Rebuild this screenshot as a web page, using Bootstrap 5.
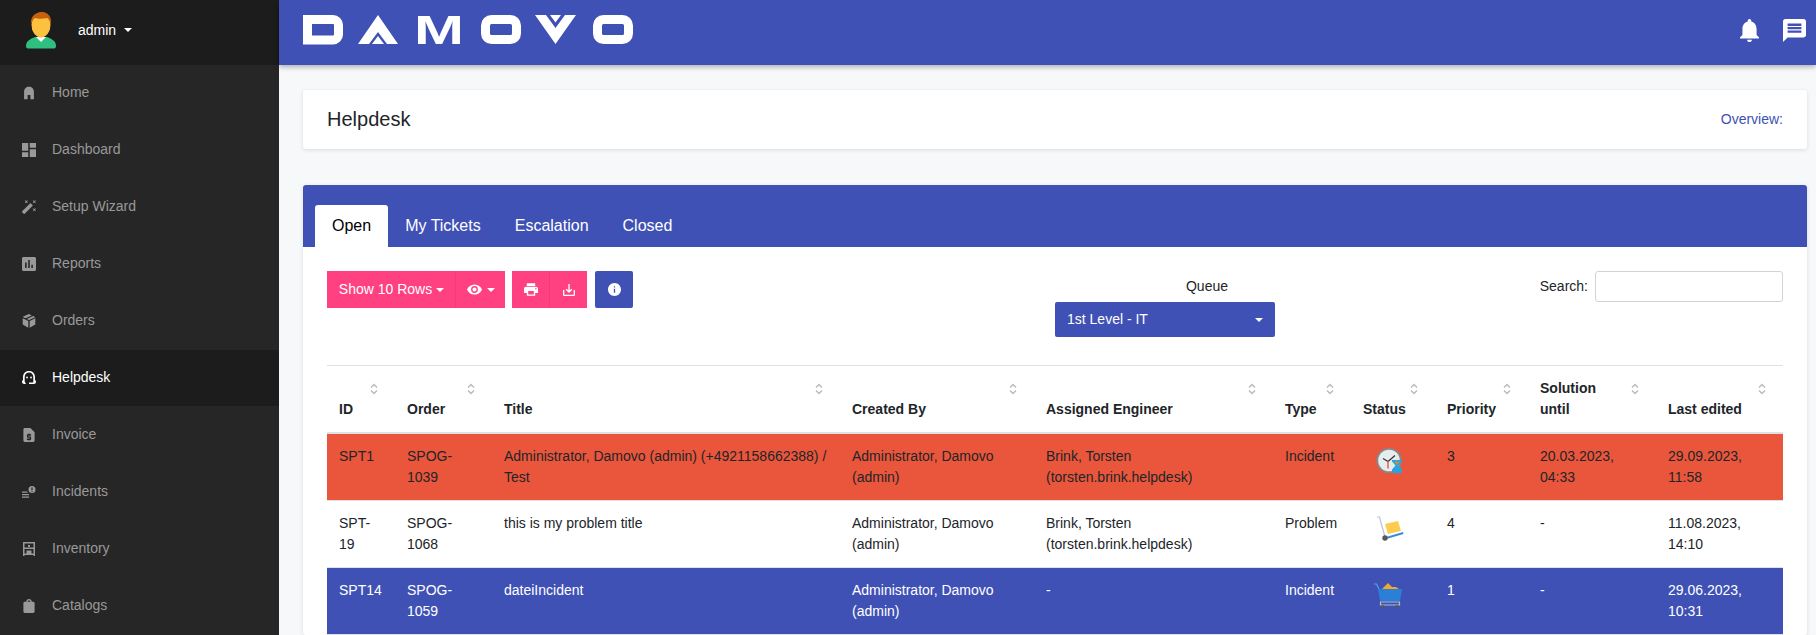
<!DOCTYPE html>
<html lang="en">
<head>
  <meta charset="UTF-8">
  <title>Helpdesk | Damovo</title>
  <link href="https://cdn.jsdelivr.net/npm/bootstrap@5.3.3/dist/css/bootstrap.min.css" rel="stylesheet">
  <style>
    html, body { height: 100%; overflow: hidden; }
    body {
      background-color: #f7f8fa;
      font-family: "Liberation Sans", Arial, sans-serif;
      font-size: 14px;
      color: #212529;
    }
    .side-bar { width: 279px; background: #262626; flex-shrink: 0; }
    .side-head { height: 65px; background: #1c1c1c; padding: 0 0 5px 26px; }
    .side-head .user-name { color: #fff; margin-left: 22px; }
    .side-caret, .sel-caret {
      display: inline-block; width: 0; height: 0;
      border-left: 4px solid transparent; border-right: 4px solid transparent; border-top: 4px solid #fff;
    }
    .side-caret { margin-left: 8px; }
    .side-link { height: 56px; margin-bottom: 1px; padding: 0 0 1px 22px; color: #999; gap: 16px; }
    .side-link svg { width: 14px; height: 14px; fill: #999; flex-shrink: 0; }
    .side-link.is-active { background: #1c1c1c; color: #fff; }
    .side-link.is-active svg { fill: #fff; }
    .main-area { min-width: 0; }
    .top-bar { height: 65px; background: #3f51b5; padding: 0 10px 0 24px; box-shadow: 0 2px 5px rgba(0,0,0,.3); flex-shrink: 0; }
    .top-bar svg { fill: #fff; margin-bottom: 5px; }
    .logo-art { overflow: visible; }
    .bell-ico { width: 19px; height: 23px; }
    .msg-ico { width: 23px; height: 23px; }
    .top-icons { gap: 24px; }
    .page-wrap { padding: 25px 9px 0 24px; }
    .title-box {
      height: 59px; background: #fff; border-radius: 3px; padding: 0 24px;
      box-shadow: 0 1px 4px rgba(0,0,0,.12); margin-bottom: 36px;
    }
    .title-box h1 { font-size: 20px; font-weight: 400; margin: 0 0 2px; }
    .title-box a { color: #3f51b5; text-decoration: none; }
    .tabs-box { background: #fff; border-radius: 3px; box-shadow: 0 1px 4px rgba(0,0,0,.12); }
    .tabs-head { background: #3f51b5; height: 62px; padding: 20px 12px 0; border-radius: 3px 3px 0 0; }
    .tabs-head .nav-tabs { border: 0; }
    .tabs-head .nav-link {
      color: #fff; font-size: 16px; height: 42px; padding: 9px 17px; border: 0; border-radius: 3px 3px 0 0; line-height: 24px;
    }
    .tabs-head .nav-link.active { color: #000; background: #fff; }
    .tabs-body { padding: 24px 24px 0; }
    .tool-row { height: 95px; border-bottom: 1px solid #dee2e6; }
    .tool-left { width: 50%; gap: 7px; }
    .tool-btn {
      height: 37px; border: 0; border-radius: 0; color: #fff; background: #ff4081;
      font-size: 14px; padding: 0; display: inline-flex; align-items: center; justify-content: center;
    }
    .tool-btn svg { fill: #fff; }
    .tool-btn + .tool-btn { border-left: 1px solid #f53a78; }
    .btn-rows { width: 128px; padding-left: 1px; }
    .btn-eye { width: 50px; }
    .btn-eye svg { width: 15px; height: 11px; margin-right: 1px; }
    .btn-print { width: 37px; }
    .btn-print svg { width: 14px; height: 13px; }
    .btn-down { width: 38px; }
    .btn-down svg { width: 12px; height: 12px; }
    .tool-btn.blue-btn { background: #3f51b5; width: 38px; border-radius: 2px; margin-left: 1px; }
    .blue-btn svg { width: 13px; height: 13px; }
    .btn-caret { display: inline-block; border-left: 4px solid transparent; border-right: 4px solid transparent; border-top: 4px solid #fff; margin-left: 4px; }
    .queue-box { width: 220px; }
    .queue-box label { display: block; padding-left: 84px; text-align: center; margin: 5px 0 5px; height: 21px; line-height: 21px; }
    .queue-sel { height: 35px; background: #3f51b5; color: #fff; border-radius: 2px; padding: 0 12px; }
    .search-box { gap: 7px; height: 31px; }
    .search-box input { width: 188px; height: 31px; border: 1px solid #ced4da; border-radius: 3px; }
    .tick-table { table-layout: fixed; width: 100%; margin: 0; color: #212529; --bs-table-bg: transparent; }
    .tick-table th, .tick-table td { padding: 12px; line-height: 21px; border-bottom: 1px solid #dee2e6; vertical-align: top; }
    .tick-table thead th { position: relative; vertical-align: bottom; font-weight: 700; border-bottom: 2px solid #dee2e6; height: 67px; padding-top: 11px; padding-bottom: 12px; }
    .sort-ico { position: absolute; right: 17px; top: 17px; width: 8px; height: 12px; fill: none; stroke: #bbb; stroke-width: 1.5; }
    .row-red td { background: #ea563b; }
    .row-blue td { background: #3f51b5; color: #fff; }
    .stat-ico { width: 30px; height: 30px; display: block; margin-left: 11px; }
    .c-id { width: 68px; } .c-order { width: 97px; } .c-title { width: 348px; } .c-by { width: 194px; }
    .c-eng { width: 239px; } .c-type { width: 78px; } .c-stat { width: 84px; } .c-prio { width: 93px; }
    .c-sol { width: 128px; } .c-last { width: 127px; }
  </style>
</head>
<body>
<div class="d-flex h-100">
  <aside class="side-bar">
    <div class="side-head d-flex align-items-center">
      <svg width="30" height="37" viewBox="0 0 30 37">
        <path d="M0 34c0-5 4-7 9-9h12c5 2 9 4 9 9 0 2-1 2.500-3 2.500H3c-2 0-3-.5-3-2.500z" fill="#2fc07f"/>
        <path d="M10 25h10l-5 5z" fill="#fff"/>
        <ellipse cx="15" cy="13" rx="9.500" ry="12.500" fill="#fbc13f"/>
        <path d="M5 13C4 5 9 0 16 0c6 0 10 5 9 13-1-4-2-6-4-7-4 1-9 1-12 0-2 1-3 3-4 7z" fill="#c8610e"/>
      </svg>
      <span class="user-name">admin</span><span class="side-caret"></span>
    </div>
    <div class="d-flex flex-column">
      <a class="side-link d-flex align-items-center text-decoration-none"><svg viewBox="2 3 20 18"><path d="M12 3C8 3 5 6 5 10v11h5v-6h4v6h5V10c0-4-3-7-7-7z"/></svg>Home</a>
      <a class="side-link d-flex align-items-center text-decoration-none"><svg viewBox="3 3 18 18"><path d="M3 13h8V3H3v10zm0 8h8v-6H3v6zm10 0h8V11h-8v10zm0-18v6h8V3h-8z"/></svg>Dashboard</a>
      <a class="side-link d-flex align-items-center text-decoration-none"><svg viewBox="1 2 21 21"><path d="M7.500 5.600 10 7 8.600 4.500 10 2 7.500 3.400 5 2l1.400 2.500L5 7zm12 9.800L17 14l1.400 2.500L17 19l2.500-1.400L22 19l-1.400-2.500L22 14zM22 2l-2.500 1.400L17 2l1.400 2.500L17 7l2.500-1.400L22 7l-1.400-2.500zm-7.630 5.290a1 1 0 0 0-1.410 0L1.290 18.960a1 1 0 0 0 0 1.410l2.340 2.340c.39.39 1.020.39 1.410 0L16.700 11.050a1 1 0 0 0 0-1.410z"/></svg>Setup Wizard</a>
      <a class="side-link d-flex align-items-center text-decoration-none"><svg viewBox="3 3 18 18"><path d="M19 3H5c-1.100 0-2 .9-2 2v14c0 1.100.9 2 2 2h14c1.100 0 2-.9 2-2V5c0-1.100-.9-2-2-2zM9 17H7v-7h2v7zm4 0h-2V7h2v10zm4 0h-2v-4h2v4z"/></svg>Reports</a>
      <a class="side-link d-flex align-items-center text-decoration-none"><svg viewBox="2 2 20 20"><path d="M12 2 3 6l4 2 9-4zM18 5 9 9l3 1.500L21 6.500zM3 8v9l8 4.500V12zM21 8l-8 4v9.500l8-4.500z"/></svg>Orders</a>
      <a class="side-link is-active d-flex align-items-center text-decoration-none"><svg viewBox="0 0 14 14"><path d="M7 0C3.300 0 1 2.700 1 6.200V9c-.7.400-1 1-1 1.700C0 12 1 13 2.300 13H4l-1.300-2.400V6.200C2.700 3.600 4.500 1.600 7 1.600s4.300 2 4.300 4.600v5.300H7V13h4.700c1.300 0 2.300-1 2.300-2.300 0-.7-.3-1.300-1-1.700V6.200C13 2.700 10.700 0 7 0z"/><circle cx="5" cy="6.500" r=".9"/><circle cx="9" cy="6.500" r=".9"/></svg>Helpdesk</a>
      <a class="side-link d-flex align-items-center text-decoration-none"><svg viewBox="4 2 16 20"><path fill-rule="evenodd" d="M14 2H6c-1.100 0-2 .9-2 2v16c0 1.100.9 2 2 2h12c1.100 0 2-.9 2-2V8zM11 10h2v1h2v2h-4v1h3c.6 0 1 .4 1 1v3c0 .6-.4 1-1 1h-1v1h-2v-1H9v-2h4v-1h-3c-.6 0-1-.4-1-1v-3c0-.6.4-1 1-1h1z"/></svg>Invoice</a>
      <a class="side-link d-flex align-items-center text-decoration-none"><svg viewBox="0 0 14 14"><path fill-rule="evenodd" d="M10 1a3.500 3.500 0 1 0 0 7 3.500 3.500 0 0 0 0-7zM9.400 2.500h1.200v2.600H9.400zm0 3.200h1.200v1H9.400zM0 6.500h5.500v1.300H0zM0 9h7v1.300H0zm0 2.500h7v1.300H0z"/></svg>Incidents</a>
      <a class="side-link d-flex align-items-center text-decoration-none"><svg viewBox="0 0 14 14"><path fill-rule="evenodd" d="M1 0h12v14h-1.500v-1h-9v1H1zm1.500 1.500v4h9v-4zm0 5.500v4.500h9V7zM4.500 8.500h5v3h-5zM6 3h2v2H6z"/></svg>Inventory</a>
      <a class="side-link d-flex align-items-center text-decoration-none"><svg viewBox="4 2 16 20"><path d="M18 6h-2c0-2.200-1.800-4-4-4S8 3.800 8 6H6c-1.100 0-2 .9-2 2v12c0 1.100.9 2 2 2h12c1.100 0 2-.9 2-2V8c0-1.100-.9-2-2-2zm-6-2c1.100 0 2 .9 2 2h-4c0-1.100.9-2 2-2z"/></svg>Catalogs</a>
    </div>
  </aside>

  <div class="main-area flex-grow-1 d-flex flex-column">
    <nav class="top-bar d-flex align-items-center justify-content-between">
      <svg class="logo-art" width="332" height="30" viewBox="0 0 332 30" role="img" aria-label="DAMOVO">
        <path d="M4.500 4.500H30a5.500 5.500 0 0 1 5.500 5.500v9.500A5.500 5.500 0 0 1 30 25H4.500z" fill="none" stroke="#fff" stroke-width="9"/>
        <path d="M75 0 95 29H84L75 17 66 29H55z" fill="#fff"/>
        <path d="M75 21 81 29H69z" fill="#fff"/>
        <text x="111" y="29" font-family="Liberation Sans, Arial, sans-serif" font-weight="700" font-size="40" textLength="50" lengthAdjust="spacingAndGlyphs" fill="#fff">M</text>
        <rect x="182.500" y="4.500" width="31" height="20" rx="6" fill="none" stroke="#fff" stroke-width="9"/>
        <path d="M232 0h11l9.500 13L262 0h11l-20.500 29z" fill="#fff"/>
        <path d="M247 0h11l-5.500 7.500z" fill="#fff"/>
        <rect x="294.500" y="4.500" width="31" height="20" rx="6" fill="none" stroke="#fff" stroke-width="9"/>
      </svg>
      <div class="top-icons d-flex align-items-center">
        <svg class="bell-ico" viewBox="4 2.500 16 19.500"><path d="M12 22c1.100 0 2-.9 2-2h-4c0 1.100.9 2 2 2zm6-6v-5c0-3.070-1.630-5.640-4.500-6.320V4c0-.83-.67-1.500-1.500-1.500s-1.500.67-1.500 1.500v.68C7.640 5.360 6 7.920 6 11v5l-2 2v1h16v-1z"/></svg>
        <svg class="msg-ico" viewBox="2 2 20 20"><path d="M20 2H4c-1.100 0-1.990.9-1.990 2L2 22l4-4h14c1.100 0 2-.9 2-2V4c0-1.100-.9-2-2-2zm-2 12H6v-2h12v2zm0-3H6V9h12v2zm0-3H6V6h12v2z"/></svg>
      </div>
    </nav>

    <div class="page-wrap">
      <div class="title-box d-flex align-items-center justify-content-between">
        <h1>Helpdesk</h1>
        <a href="#">Overview:</a>
      </div>

      <div class="tabs-box">
        <div class="tabs-head">
          <ul class="nav nav-tabs">
            <li class="nav-item"><a class="nav-link active" href="#">Open</a></li>
            <li class="nav-item"><a class="nav-link" href="#">My Tickets</a></li>
            <li class="nav-item"><a class="nav-link" href="#">Escalation</a></li>
            <li class="nav-item"><a class="nav-link" href="#">Closed</a></li>
          </ul>
        </div>
        <div class="tabs-body">
          <div class="tool-row d-flex align-items-start">
            <div class="tool-left d-flex">
              <div class="d-flex">
                <button class="tool-btn btn-rows">Show 10 Rows<span class="btn-caret"></span></button>
                <button class="tool-btn btn-eye"><svg viewBox="1 4 22 16"><path fill-rule="evenodd" d="M12 4.500C7 4.500 2.700 7.600 1 12c1.700 4.400 6 7.500 11 7.500s9.300-3.100 11-7.500c-1.700-4.400-6-7.500-11-7.500zM12 17a5 5 0 1 1 0-10 5 5 0 0 1 0 10zm0-8a3 3 0 1 0 0 6 3 3 0 0 0 0-6z"/></svg><span class="btn-caret"></span></button>
              </div>
              <div class="d-flex">
                <button class="tool-btn btn-print"><svg viewBox="2 3 20 18"><path d="M19 8H5c-1.660 0-3 1.340-3 3v6h4v4h12v-4h4v-6c0-1.660-1.340-3-3-3zm-3 11H8v-5h8v5zm3-7c-.55 0-1-.45-1-1s.45-1 1-1 1 .45 1 1-.45 1-1 1zm-1-9H6v4h12V3z"/></svg></button>
                <button class="tool-btn btn-down"><svg viewBox="3 3 18 18"><path d="M19 12v7H5v-7H3v7c0 1.100.9 2 2 2h14c1.100 0 2-.9 2-2v-7h-2zm-6 .67 2.590-2.580L17 11.500l-5 5-5-5 1.410-1.410L11 12.670V3h2z"/></svg></button>
              </div>
              <button class="tool-btn blue-btn"><svg viewBox="2 2 20 20"><path d="M12 2C6.480 2 2 6.480 2 12s4.480 10 10 10 10-4.480 10-10S17.520 2 12 2zm1 15h-2v-6h2v6zm0-8h-2V7h2v2z"/></svg></button>
            </div>
            <div class="queue-box">
              <label>Queue</label>
              <div class="queue-sel d-flex align-items-center justify-content-between">1st Level - IT<span class="sel-caret"></span></div>
            </div>
            <div class="search-box ms-auto d-flex align-items-center">
              <span>Search:</span><input type="text" aria-label="Search">
            </div>
          </div>

          <table class="table tick-table">
            <colgroup>
              <col class="c-id"><col class="c-order"><col class="c-title"><col class="c-by"><col class="c-eng">
              <col class="c-type"><col class="c-stat"><col class="c-prio"><col class="c-sol"><col class="c-last">
            </colgroup>
            <thead>
              <tr id="headRow">
                <th>ID</th><th>Order</th><th>Title</th><th>Created By</th><th>Assigned Engineer</th>
                <th>Type</th><th>Status</th><th>Priority</th><th>Solution<br>until</th><th>Last edited</th>
              </tr>
            </thead>
            <tbody>
              <tr class="row-red">
                <td>SPT1</td><td>SPOG-1039</td><td>Administrator, Damovo (admin) (+4921158662388) / Test</td>
                <td>Administrator, Damovo (admin)</td><td>Brink, Torsten (torsten.brink.helpdesk)</td><td>Incident</td>
                <td>
                  <svg class="stat-ico" viewBox="0 0 30 30">
                    <circle cx="15" cy="14.500" r="11.700" fill="#e9ecec" stroke="#808a90" stroke-width="1.800"/>
                    <path d="M14 15.500 9 12.500M14 15.500l7-6" stroke="#33363a" stroke-width="1.300" fill="none"/>
                    <path d="M14 15.500v7" stroke="#d9694a" stroke-width="1.500" fill="none"/>
                    <path d="M18 14h10v1.500l-3.500 4 3.500 4V27H18v-3.500l3.500-4-3.500-4z" fill="#27a3e0"/>
                    <path d="M20 15.500h6l-3 3.500z" fill="#d98a3a"/>
                  </svg>
                </td>
                <td>3</td><td>20.03.2023, 04:33</td><td>29.09.2023, 11:58</td>
              </tr>
              <tr>
                <td>SPT-19</td><td>SPOG-1068</td><td>this is my problem title</td>
                <td>Administrator, Damovo (admin)</td><td>Brink, Torsten (torsten.brink.helpdesk)</td><td>Problem</td>
                <td>
                  <svg class="stat-ico" viewBox="0 0 30 30">
                    <path d="M3 4h2.500l5.500 20" stroke="#b7c6d3" stroke-width="1.200" fill="none"/>
                    <path d="m11 11 13-3 3 10-13 3z" fill="#fdcb4d"/>
                    <path d="m12 24 17-5 .5 2-17 5z" fill="#3a8bd8"/>
                    <circle cx="11" cy="25" r="2.700" fill="#55585c"/>
                  </svg>
                </td>
                <td>4</td><td>-</td><td>11.08.2023, 14:10</td>
              </tr>
              <tr class="row-blue">
                <td>SPT14</td><td>SPOG-1059</td><td>dateiIncident</td>
                <td>Administrator, Damovo (admin)</td><td>-</td><td>Incident</td>
                <td>
                  <svg class="stat-ico" viewBox="0 0 30 30">
                    <path d="M8 9l6-6 4 4 4 0 3 2z" fill="#f0a92c"/>
                    <path d="M0 4h2.500L5 9" stroke="#4aa3e8" stroke-width="1.200" fill="none"/>
                    <path d="M4 9h24l-2 12H6z" fill="#2a80d6"/>
                    <path d="M6.500 22h19v3h-19z" fill="none" stroke="#b4bdc6" stroke-width="1.200"/>
                    <circle cx="9" cy="26.500" r="1.600" fill="#55585c"/><circle cx="23" cy="26.500" r="1.600" fill="#55585c"/>
                  </svg>
                </td>
                <td>1</td><td>-</td><td>29.06.2023, 10:31</td>
              </tr>
            </tbody>
          </table>
        </div>
      </div>
    </div>
  </div>
</div>
<script src="https://cdn.jsdelivr.net/npm/bootstrap@5.3.3/dist/js/bootstrap.bundle.min.js"></script>
<script>
  // sort arrows on every header cell
  document.querySelectorAll("#headRow th").forEach(function (th) {
    th.insertAdjacentHTML("beforeend", '<svg class="sort-ico" viewBox="0 0 8 12"><path d="M1 4.500 4 1.500 7 4.500M1 7.500 4 10.500 7 7.500"/></svg>');
  });
</script>
</body>
</html>
